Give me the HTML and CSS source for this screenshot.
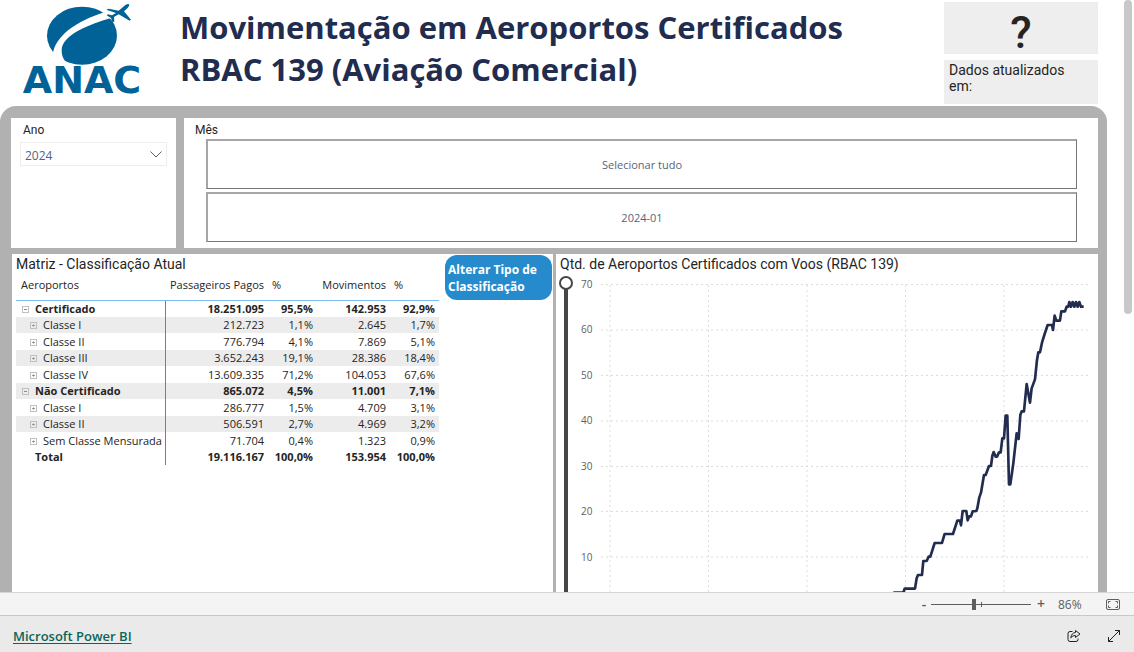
FILE: index.html
```html
<!DOCTYPE html>
<html lang="pt-BR">
<head>
<meta charset="utf-8">
<title>Movimentação em Aeroportos Certificados</title>
<link rel="stylesheet" href="styles.css">
</head>
<body>
<main class="report">
  <div class="canvas">
    <header class="header">
      <svg class="logo" viewBox="0 0 170 106" role="img" aria-label="ANAC">
        <g transform="scale(.3333)">
          <ellipse cx="246" cy="107" rx="105" ry="87" fill="#006297"/>
          <path d="M158 164C166 108 226 64 316 36L336 53C270 72 186 104 185 150C185 170 192 182 206 194L180 190Z" fill="#fff"/>
          <path d="M319 29L326 26L356 32L376 15Q386 10 388 14Q388 20 372 34L393 59L389 62L356 43L342 51L343 64L338 68L333 54L320 46L324 43L336 46L348 39Z" fill="#006297"/>
        </g>
        <text class="logo-text" x="82" y="93" text-anchor="middle">ANAC</text>
      </svg>
      <h1 class="title">Movimentação em Aeroportos Certificados<br>RBAC 139 (Aviação Comercial)</h1>
      <div class="side">
        <button class="help" type="button" aria-label="Ajuda">?</button>
        <p class="updated">Dados atualizados<br>em:</p>
      </div>
    </header>

    <div class="panel">
      <div class="filters">
        <section class="card year">
          <label class="label" for="ano">Ano</label>
          <div class="select-wrap">
            <select id="ano" class="select"><option>2024</option></select>
            <svg class="chevron" viewBox="0 0 12 7"><path d="M.5 .5L6 6L11.5 .5"/></svg>
          </div>
        </section>
        <section class="card month">
          <h2 class="label">Mês</h2>
          <div class="tiles">
            <button class="tile" type="button">Selecionar tudo</button>
            <button class="tile" type="button">2024-01</button>
          </div>
        </section>
      </div>

      <div class="visuals">
        <section class="card matrix">
          <div class="matrix-main">
            <h2 class="heading">Matriz - Classificação Atual</h2>
            <table class="table">
              <colgroup><col class="c-name"><col class="c-pax"><col class="c-pct"><col class="c-mov"><col class="c-pct"></colgroup>
              <thead><tr><th>Aeroportos</th><th class="r">Passageiros Pagos</th><th>%</th><th class="r">Movimentos</th><th>%</th></tr></thead>
              <tbody>
                <tr class="group"><th><button class="toggle" type="button" aria-label="Recolher"></button>Certificado</th><td>18.251.095</td><td>95,5%</td><td>142.953</td><td>92,9%</td></tr>
                <tr><th><button class="toggle plus" type="button" aria-label="Expandir"></button>Classe I</th><td>212.723</td><td>1,1%</td><td>2.645</td><td>1,7%</td></tr>
                <tr><th><button class="toggle plus" type="button" aria-label="Expandir"></button>Classe II</th><td>776.794</td><td>4,1%</td><td>7.869</td><td>5,1%</td></tr>
                <tr><th><button class="toggle plus" type="button" aria-label="Expandir"></button>Classe III</th><td>3.652.243</td><td>19,1%</td><td>28.386</td><td>18,4%</td></tr>
                <tr><th><button class="toggle plus" type="button" aria-label="Expandir"></button>Classe IV</th><td>13.609.335</td><td>71,2%</td><td>104.053</td><td>67,6%</td></tr>
                <tr class="group"><th><button class="toggle" type="button" aria-label="Recolher"></button>Não Certificado</th><td>865.072</td><td>4,5%</td><td>11.001</td><td>7,1%</td></tr>
                <tr><th><button class="toggle plus" type="button" aria-label="Expandir"></button>Classe I</th><td>286.777</td><td>1,5%</td><td>4.709</td><td>3,1%</td></tr>
                <tr><th><button class="toggle plus" type="button" aria-label="Expandir"></button>Classe II</th><td>506.591</td><td>2,7%</td><td>4.969</td><td>3,2%</td></tr>
                <tr><th><button class="toggle plus" type="button" aria-label="Expandir"></button>Sem Classe Mensurada</th><td>71.704</td><td>0,4%</td><td>1.323</td><td>0,9%</td></tr>
                <tr class="group total"><th>Total</th><td>19.116.167</td><td>100,0%</td><td>153.954</td><td>100,0%</td></tr>
              </tbody>
            </table>
          </div>
          <button class="switch" type="button">Alterar Tipo de Classificação</button>
        </section>

        <section class="card chart">
          <h2 class="heading">Qtd. de Aeroportos Certificados com Voos (RBAC 139)</h2>
          <div class="chart-body">
            <input class="y-zoom" type="range" min="0" max="100" value="0" aria-label="Zoom do eixo Y">
            <svg class="plot" viewBox="576 276 522 338" role="img" aria-label="Aeroportos certificados com voos">
              <g class="grid">
                <path d="M601 284.5H1091M601 330H1091M601 375.5H1091M601 421H1091M601 466.5H1091M601 511.5H1091M601 557H1091"/>
                <path d="M610 285V614M708.500 285V614M807 285V614M905.500 285V614M1004 285V614"/>
              </g>
              <g class="ticks">
                <text x="581" y="288">70</text><text x="581" y="333">60</text><text x="581" y="379">50</text><text x="581" y="424">40</text><text x="581" y="470">30</text><text x="581" y="515">20</text><text x="581" y="561">10</text>
              </g>
              <g transform="translate(880 440) scale(.3333)">
                <path class="line" d="M40 458H70L74 446H105L110 415L114 405H126L130 363H140L146 350H151L164 309H186L194 282H219L232 242H240L243 256L248 213H259L263 241L268 229H273L278 214L289 213L292 205L298 172L303 158L312 105H317L327 78H333L337 48L341 36L347 50H351L357 37H362L367 -5H372L377 -73H382L387 133H391L400 70L410 -20L416 -3L421 -75L425 -86H432L440 -168L450 -112L455 -155L465 -182L471 -240L475 -263H480L486 -292L493 -315L503 -345H516L519 -330L524 -373L529 -358H540L544 -386H555L560 -400H565L568 -414L573 -400L578 -414L583 -400L588 -414L593 -400L598 -414L603 -400H611"/>
              </g>
            </svg>
          </div>
        </section>
      </div>
    </div>
  </div>
  <div class="scrollbar"><div class="thumb"></div></div>
</main>

<div class="zoombar">
  <button class="step" type="button" aria-label="Reduzir">-</button>
  <input class="zoom" type="range" min="0" max="100" value="43" aria-label="Zoom">
  <button class="step" type="button" aria-label="Ampliar">+</button>
  <span class="percent">86%</span>
  <button class="icon fit" type="button" aria-label="Ajustar à página">
    <svg width="14" height="11" viewBox="0 0 14 11"><rect x=".5" y=".5" width="13" height="10" rx="1.500"/><path d="M2.500 4.500V2.500H4.500M9.500 2.500H11.500V4.500M2.500 6.500V8.500H4.500M9.500 8.500H11.500V6.500"/></svg>
  </button>
</div>

<footer class="footer">
  <a class="brand" href="#">Microsoft Power BI</a>
  <button class="icon" type="button" aria-label="Compartilhar">
    <svg width="14" height="14" viewBox="0 0 14 14"><path d="M5.500 2.500H3Q1 2.500 1 4.500V10.500Q1 12.500 3 12.500H9Q11 12.500 11 10.500V9.500"/><path d="M8.500 1.500L13 5L8.500 8.500V6.500Q5.500 6.300 3.800 8.800Q4.300 4 8.500 3.500Z"/></svg>
  </button>
  <button class="icon" type="button" aria-label="Tela inteira">
    <svg width="14" height="14" viewBox="0 0 14 14"><path d="M1.500 12.500L12.500 1.500M8 1.500H12.500V6M1.500 8V12.500H6"/></svg>
  </button>
</footer>
</body>
</html>
```

FILE: styles.css
```css
* { box-sizing: border-box; }

body {
  margin: 0;
  height: 100vh;
  display: flex;
  flex-direction: column;
  background: #fff;
  color: #252423;
  font-family: "Open Sans", "Noto Sans", sans-serif;
  font-size: 12px;
}

h1, h2, p { margin: 0; }

button, select, input { font: inherit; margin: 0; padding: 0; }

button { border: 0; background: none; color: inherit; }

.report { flex: 1; min-height: 0; display: flex; overflow: hidden; }

.canvas {
  flex: 1;
  min-width: 0;
  display: flex;
  flex-direction: column;
}

.header {
  display: flex;
  flex: none;
  padding-right: 19px;
  height: 106px;
}

.logo { width: 170px; flex: none; }

.logo-text {
  font: bold 38px "DejaVu Sans", sans-serif;
  fill: #006297;
}

.title {
  flex: 1;
  padding: 6px 0 0 10px;
  color: #212c4f;
  font-size: 31px;
  line-height: 42px;
  font-weight: 700;
  white-space: nowrap;
}

.side {
  width: 154px;
  padding: 2px 0;
  display: flex;
  flex-direction: column;
  gap: 6px;
  font-family: Roboto, sans-serif;
}

.help {
  height: 52px;
  padding-top: 10px;
  background: #eee;
  font-size: 44px;
  font-weight: 500;
  line-height: 42px;
}

.updated {
  flex: 1;
  padding: 2px 5px;
  background: #eee;
  font-size: 14px;
  line-height: 16px;
}

.panel {
  flex: 1;
  min-height: 0;
  margin-right: 10px;
  padding: 12px 9px 0 11px;
  display: flex;
  flex-direction: column;
  gap: 6px;
  border-radius: 16px 16px 0 0;
  background: #b1b1b1;
}

.card { background: #fff; }

.filters { display: flex; gap: 8px; flex: none; height: 130px; }

.year { width: 165px; padding: 4px 9px; }

.month { flex: 1; padding: 4px 11px; }

.label {
  display: block;
  padding-left: 3px;
  font: 12px/16px Roboto, sans-serif;
}

.month .label { padding-left: 0; }

.select-wrap { display: grid; align-items: center; margin-top: 4px; }

.select {
  grid-area: 1 / 1;
  appearance: none;
  width: 100%;
  height: 24px;
  padding: 2px 4px 0;
  border: 1px solid #eee;
  border-radius: 0;
  background: #fff;
  color: #55657d;
}

.chevron {
  grid-area: 1 / 1;
  justify-self: end;
  width: 12px;
  margin-right: 5px;
  fill: none;
  stroke: #605e5c;
  pointer-events: none;
}

.tiles { display: flex; flex-direction: column; gap: 3px; padding: 1px 10px 0 11px; }

.tile {
  height: 50px;
  border: 2px solid #a6a6a6;
  border-bottom: 1px solid #777;
  border-right: 1px solid #777;
  color: #55657d;
  font-size: 11px;
}

.visuals { flex: 1; min-height: 0; display: flex; gap: 3px; padding-left: 1px; }

.matrix {
  width: 541px;
  display: flex;
  align-items: flex-start;
  justify-content: space-between;
  padding: 1px 1px 0 4px;
}

.heading { font: 14px/18px Roboto, sans-serif; white-space: nowrap; }

.table {
  width: 423px;
  table-layout: fixed;
  border-collapse: collapse;
  font-size: 11px;
  line-height: 16px;
  white-space: nowrap;
}

.c-name { width: 149px; }
.c-pax { width: 103px; }
.c-pct { width: 49px; }
.c-mov { width: 73px; }

.table th, .table td { padding: 0 4px; font-weight: 400; }

.table th { text-align: left; }

.table td, .table .r { text-align: right; }

.table thead th { height: 27px; padding-bottom: 3px; border-bottom: 1px solid #7cbcf0; }

.table thead th:first-child { padding-left: 5px; }

.table tbody tr { height: 17px; }

.table tbody tr:nth-child(even) { height: 16px; background: #ececec; }

.table tbody tr.total { background: #fff; }

.table tbody th { border-right: 1px solid #3b8ede; padding-left: 14px; padding-right: 0; }

.table tbody .group th { padding-left: 6px; }

.table tbody .group th, .table tbody .group td { font-weight: 700; }

.table tbody .total th { padding-left: 19px; }

.toggle {
  width: 7px;
  height: 7px;
  margin-right: 6px;
  border: 1px solid #c0c0c0;
  vertical-align: 1px;
  background: linear-gradient(#888, #888) center / 3px 1px no-repeat;
}

.plus {
  background: linear-gradient(#999, #999) center / 3px 1px no-repeat, linear-gradient(#bbb, #bbb) center / 1px 3px no-repeat;
}

.switch {
  width: 107px;
  height: 45px;
  padding: 0 3px;
  border-radius: 12px;
  background: #268bcd;
  color: #fff;
  font-weight: 700;
  line-height: 17px;
  text-align: left;
}

.chart { flex: 1; min-width: 0; padding: 1px 0 0; overflow: hidden; }

.chart .heading { padding-left: 4px; }

.chart-body { display: flex; margin-top: 3px; align-items: flex-start; }

.y-zoom {
  appearance: none;
  writing-mode: vertical-lr;
  flex: none;
  width: 20px;
  height: 338px;
  background: linear-gradient(#484644, #484644) 8px 8px / 4px 100% no-repeat;
}

.y-zoom::-webkit-slider-thumb {
  appearance: none;
  width: 14px;
  height: 14px;
  border: 2px solid #484644;
  border-radius: 50%;
  background: #fff;
}

.plot { flex: 1; min-width: 0; }

.grid { fill: none; stroke: #dcdcdc; stroke-dasharray: 2 3; }

.ticks { font-size: 10px; fill: #605e5c; }

.line { fill: none; stroke: #212c4f; stroke-width: 8; stroke-linejoin: round; }

.scrollbar { flex: none; width: 17px; padding: 0 2px 0 7px; }

.thumb { height: 314px; border-radius: 4px; background: #c8c8c8; }

.zoombar {
  flex: none;
  height: 24px;
  display: flex;
  align-items: center;
  padding-right: 11px;
  border-top: 1px solid #d6d6d6;
  border-bottom: 1px solid #c8c8c8;
  background: #f4f4f4;
  color: #605e5c;
}

.step { width: 14px; font-size: 14px; font-weight: 600; line-height: 20px; }

.step:first-child { margin-left: auto; }

.zoom {
  appearance: none;
  width: 100px;
  height: 12px;
  margin: 0 3px 0 0;
  background:
    linear-gradient(#605e5c, #605e5c) center / 100% 1px no-repeat,
    linear-gradient(#605e5c, #605e5c) 50px center / 1px 5px no-repeat;
}

.zoom::-webkit-slider-thumb {
  appearance: none;
  width: 4px;
  height: 11px;
  background: #605e5c;
}

.percent { width: 55px; padding-left: 10px; }

.icon { width: 20px; height: 20px; display: grid; place-items: center; }

.icon svg { fill: none; stroke: #222; }

.fit svg { stroke: #605e5c; }

.footer {
  flex: none;
  height: 36px;
  display: flex;
  align-items: center;
  gap: 20px;
  padding: 4px 10px 0 13px;
  background: #eaeaea;
}

.brand {
  margin-right: auto;
  color: #0a6557;
  font-size: 13px;
  font-weight: 600;
  text-underline-offset: 2px;
}
```
